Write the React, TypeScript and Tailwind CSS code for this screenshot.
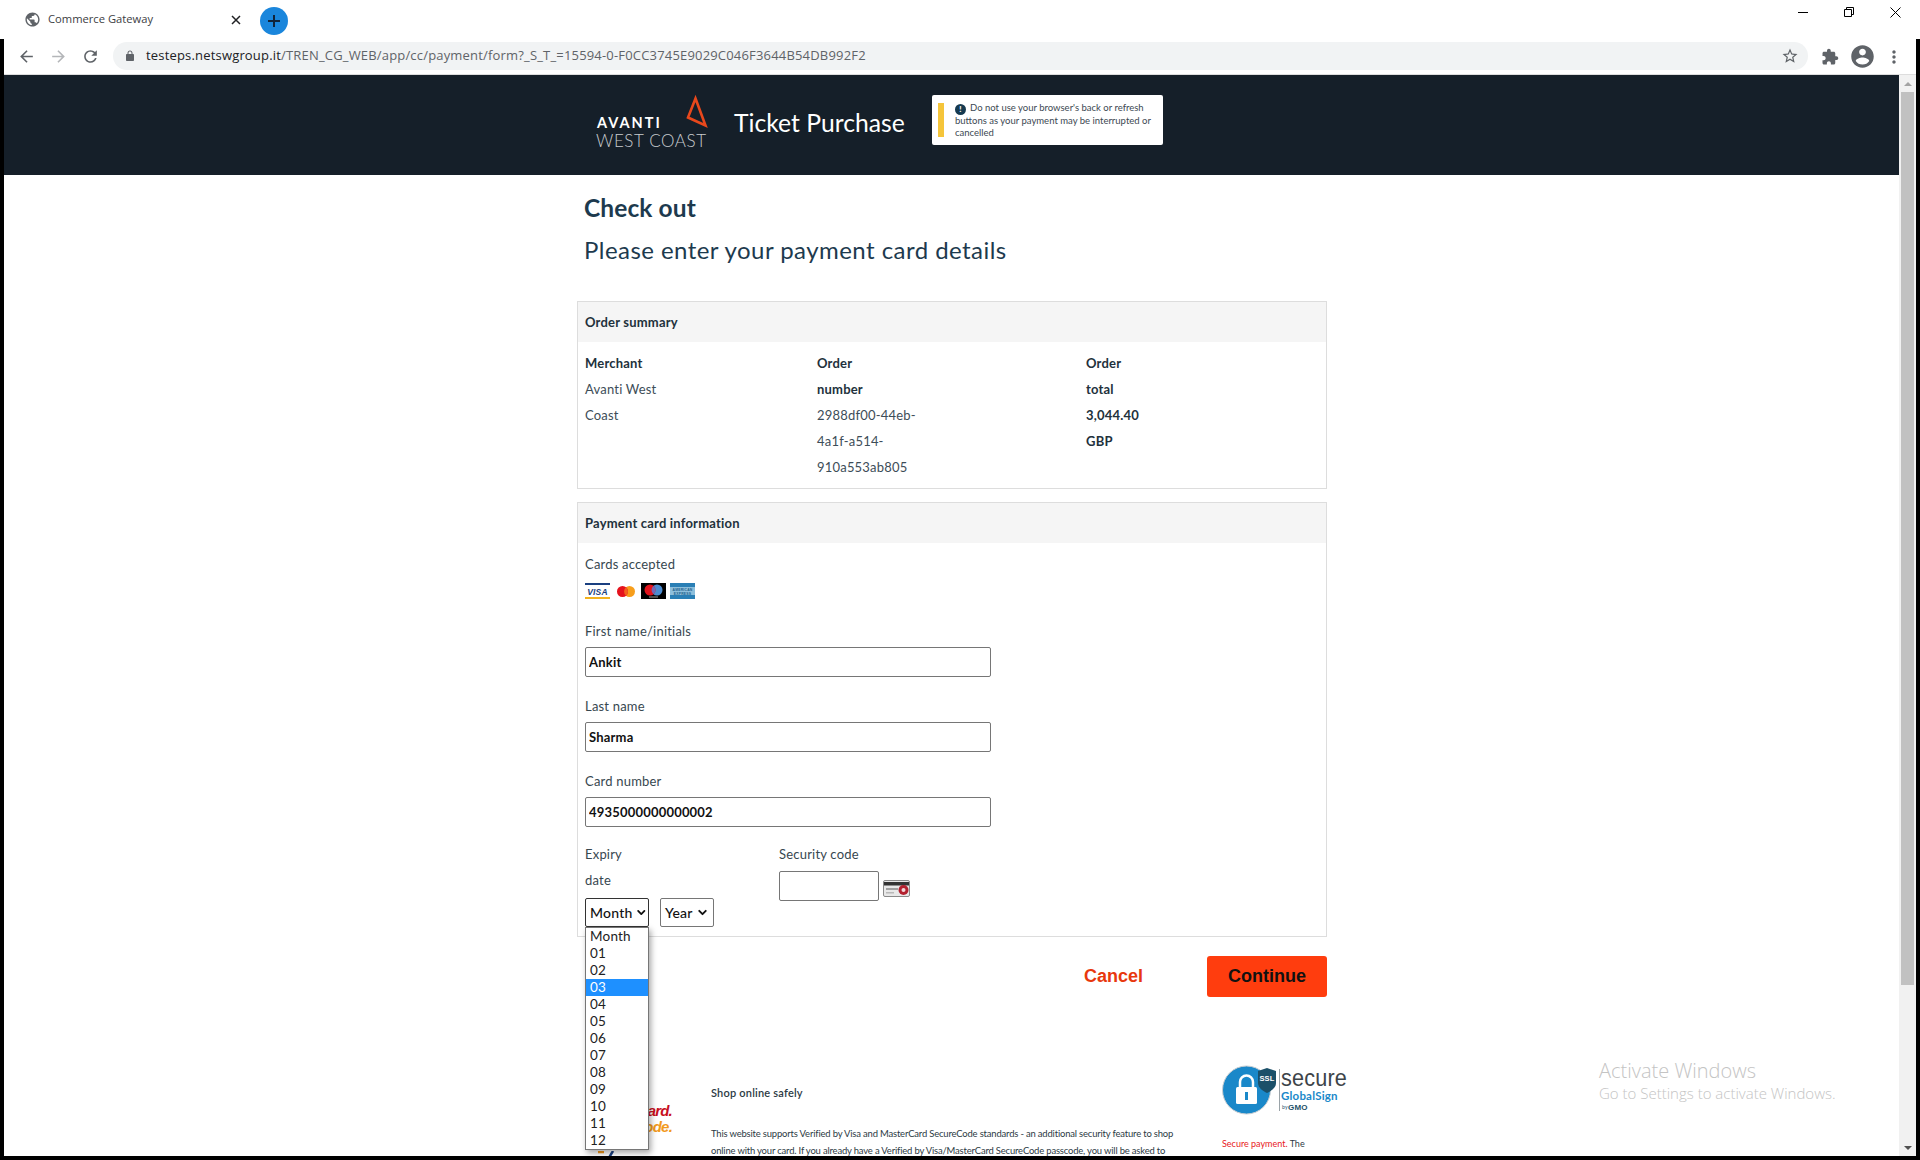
import { ChevronDown } from "lucide-react";

const months = ["Month", "01", "02", "03", "04", "05", "06", "07", "08", "09", "10", "11", "12"];

function MaterialIcon({ d, size = 24, className = "" }: { d: string; size?: number; className?: string }) {
  return (
    <svg width={size} height={size} viewBox="0 0 24 24" className={className} fill="currentColor">
      <path d={d} />
    </svg>
  );
}

const icons = {
  globe:
    "M12 2C6.48 2 2 6.48 2 12s4.48 10 10 10 10-4.48 10-10S17.52 2 12 2zm-1 17.93c-3.95-.49-7-3.85-7-7.93 0-.62.08-1.21.21-1.79L9 15v1c0 1.1.9 2 2 2v1.93zm6.9-2.54c-.26-.81-1-1.39-1.9-1.39h-1v-3c0-.55-.45-1-1-1H8v-2h2c.55 0 1-.45 1-1V7h2c1.1 0 2-.9 2-2v-.41c2.93 1.19 5 4.06 5 7.41 0 2.08-.8 3.97-2.1 5.39z",
  back: "M20 11H7.83l5.59-5.59L12 4l-8 8 8 8 1.41-1.41L7.83 13H20v-2z",
  forward: "M12 4l-1.41 1.41L16.17 11H4v2h12.17l-5.58 5.59L12 20l8-8z",
  refresh:
    "M17.65 6.35C16.2 4.9 14.21 4 12 4c-4.42 0-7.99 3.58-7.99 8s3.57 8 7.99 8c3.73 0 6.84-2.55 7.73-6h-2.08c-.82 2.33-3.04 4-5.65 4-3.31 0-6-2.69-6-6s2.69-6 6-6c1.66 0 3.14.69 4.22 1.78L13 11h7V4l-2.35 2.35z",
  lock: "M18 8h-1V6c0-2.76-2.24-5-5-5S7 3.24 7 6v2H6c-1.1 0-2 .9-2 2v10c0 1.1.9 2 2 2h12c1.1 0 2-.9 2-2V10c0-1.1-.9-2-2-2zM9 6c0-1.66 1.34-3 3-3s3 1.34 3 3v2H9V6z",
  star: "M22 9.24l-7.19-.62L12 2 9.19 8.63 2 9.24l5.46 4.73L5.82 21 12 17.27 18.18 21l-1.63-7.03L22 9.24zM12 15.4l-3.76 2.27 1-4.28-3.32-2.88 4.38-.38L12 6.1l1.71 4.04 4.38.38-3.32 2.88 1 4.28L12 15.4z",
  extension:
    "M20.5 11H19V7c0-1.1-.9-2-2-2h-4V3.5C13 2.12 11.88 1 10.5 1S8 2.12 8 3.5V5H4c-1.1 0-1.99.9-1.99 2v3.8H3.5c1.49 0 2.7 1.21 2.7 2.7s-1.21 2.7-2.7 2.7H2V20c0 1.1.9 2 2 2h3.8v-1.5c0-1.49 1.21-2.7 2.7-2.7 1.49 0 2.7 1.21 2.7 2.7V22H17c1.1 0 2-.9 2-2v-4h1.5c1.38 0 2.5-1.12 2.5-2.5S21.88 11 20.5 11z",
  account:
    "M12 2C6.48 2 2 6.48 2 12s4.48 10 10 10 10-4.48 10-10S17.52 2 12 2zm0 3c1.66 0 3 1.34 3 3s-1.34 3-3 3-3-1.34-3-3 1.34-3 3-3zm0 14.2c-2.5 0-4.71-1.28-6-3.22.03-1.99 4-3.08 6-3.08 1.99 0 5.97 1.09 6 3.08-1.29 1.94-3.5 3.22-6 3.22z",
  more: "M12 8c1.1 0 2-.9 2-2s-.9-2-2-2-2 .9-2 2 .9 2 2 2zm0 2c-1.1 0-2 .9-2 2s.9 2 2 2 2-.9 2-2-.9-2-2-2zm0 6c-1.1 0-2 .9-2 2s.9 2 2 2 2-.9 2-2-.9-2-2-2z",
};

function TabStrip() {
  return (
    <div className="flex h-[39px] items-start bg-white font-['Open_Sans',sans-serif]">
      <div className="flex h-[39px] w-[250px] items-center pl-[24px]">
        <MaterialIcon d={icons.globe} size={17} className="text-[#5f6368]" />
        <span className="ml-[7px] text-[11.2px] text-[#3c4043]">Commerce Gateway</span>
        <svg width="10" height="10" viewBox="0 0 10 10" className="ml-auto mr-[9px] text-[#202124]" stroke="currentColor" strokeWidth="1.5">
          <path d="M1 1l8 8M9 1l-8 8" />
        </svg>
      </div>
      <div className="ml-[10px] mt-[7px] flex h-[28px] w-[28px] items-center justify-center rounded-full bg-[#1a86dc]">
        <svg width="12" height="12" viewBox="0 0 12 12" stroke="#10243a" strokeWidth="2">
          <path d="M6 0v12M0 6h12" />
        </svg>
      </div>
      <div className="ml-auto flex items-center pr-[2px] pt-[3px]">
        <div className="flex h-[18px] w-[46px] items-center justify-center">
          <div className="h-px w-[10px] bg-black" />
        </div>
        <div className="flex h-[18px] w-[46px] items-center justify-center">
          <svg width="10" height="10" viewBox="0 0 10 10" fill="none" stroke="black">
            <path d="M2.5 2.5V.5h7v7h-2M.5 2.5h7v7h-7z" />
          </svg>
        </div>
        <div className="flex h-[18px] w-[46px] items-center justify-center">
          <svg width="11" height="11" viewBox="0 0 11 11" fill="none" stroke="black">
            <path d="M.5.5l10 10M10.5.5l-10 10" />
          </svg>
        </div>
      </div>
    </div>
  );
}

function Toolbar() {
  return (
    <div className="flex h-[36px] shrink-0 items-start border-b border-[#dddddd] bg-white pl-[6px] font-['Open_Sans',sans-serif]">
      <div className="flex h-[35px] w-[32px] items-center justify-center">
        <MaterialIcon d={icons.back} size={19} className="text-[#5f6368]" />
      </div>
      <div className="flex h-[35px] w-[32px] items-center justify-center">
        <MaterialIcon d={icons.forward} size={19} className="text-[#b4b6b9]" />
      </div>
      <div className="flex h-[35px] w-[32px] items-center justify-center">
        <MaterialIcon d={icons.refresh} size={19} className="text-[#5f6368]" />
      </div>
      <div className="ml-[7px] mt-[3px] flex h-[28px] flex-1 items-center rounded-full bg-[#f1f3f4] pl-[11px] pr-[9px]">
        <MaterialIcon d={icons.lock} size={12} className="text-[#5f6368]" />
        <span className="ml-[10px] text-[13px] tracking-[0.18px] text-[#5f6368]">
          <span className="text-[#202124]">testeps.netswgroup.it</span>
          /TREN_CG_WEB/app/cc/payment/form?_S_T_=15594-0-F0CC3745E9029C046F3644B54DB992F2
        </span>
        <MaterialIcon d={icons.star} size={18} className="ml-auto text-[#5f6368]" />
      </div>
      <div className="flex h-[35px] pl-[6px] pr-[6px]">
        <div className="flex w-[32px] items-center justify-center">
          <MaterialIcon d={icons.extension} size={18} className="text-[#5f6368]" />
        </div>
        <div className="flex w-[32px] items-center justify-center">
          <MaterialIcon d={icons.account} size={27} className="text-[#5f6368]" />
        </div>
        <div className="flex w-[32px] items-center justify-center">
          <MaterialIcon d={icons.more} size={20} className="text-[#5f6368]" />
        </div>
      </div>
    </div>
  );
}

function AvantiLogo() {
  return (
    <div className="relative h-[50px] w-[112px] text-white">
      <svg width="24" height="36" viewBox="0 0 24 36" className="absolute right-0 top-[-6px]" fill="none" stroke="#e8481c" strokeWidth="2.6">
        <path d="M11.5 4.5L4 23.5L21.5 31.5Z" />
      </svg>
      <div className="absolute left-[1px] top-[14px] text-[14.5px] font-bold leading-[18px] tracking-[2px]">AVANTI</div>
      <div className="absolute left-0 top-[31px] whitespace-nowrap text-[17px] font-light leading-[20px] tracking-[0.6px] text-[#c8cbce]">
        WEST COAST
      </div>
    </div>
  );
}

function Header() {
  return (
    <div className="h-[100px] shrink-0 bg-[#151f29]">
      <div className="ml-[573px] flex w-[750px] items-start pl-[19px]">
        <div className="mt-[25px]">
          <AvantiLogo />
        </div>
        <div className="ml-[26px] w-[178px] whitespace-nowrap pt-[30px] text-[24.7px] leading-[36px] text-white">Ticket Purchase</div>
        <div className="ml-[20px] mt-[20px] flex h-[50px] w-[231px] shrink-0 items-center rounded-[2px] bg-white pl-[6px]">
          <div className="h-[34px] w-[6px] bg-[#f5c53a]" />
          <div className="ml-[11px] w-[205px] text-[9.5px] leading-[11.5px] text-[#3c4852]">
            <span className="mr-[4px] inline-block h-[11px] w-[11px] rounded-full bg-[#163a50] text-center align-[-1px] text-[8px] font-black leading-[11px] text-white">
              !
            </span>
            Do not use your browser's back or refresh buttons as your payment may be interrupted or cancelled
          </div>
        </div>
      </div>
    </div>
  );
}

function CardLogos() {
  return (
    <div className="mt-[6px] flex h-[16px] items-center">
      <svg width="25" height="16" viewBox="0 0 25 16">
        <rect width="25" height="16" fill="#ffffff" />
        <rect width="25" height="2" fill="#1a3f80" />
        <rect y="14" width="25" height="2" fill="#f3b21c" />
        <text x="12.5" y="11.5" textAnchor="middle" fontSize="8.5" fontWeight="700" fontStyle="italic" fontFamily="Liberation Sans, sans-serif" fill="#1a3f80">
          VISA
        </text>
      </svg>
      <svg width="18" height="11" viewBox="0 0 18 11" className="ml-[7px]">
        <circle cx="12.5" cy="5.5" r="5.5" fill="#f79e1b" />
        <circle cx="5.5" cy="5.5" r="5.5" fill="#e5121d" />
        <path d="M9 1.3a5.5 5.5 0 0 1 0 8.4a5.5 5.5 0 0 1 0-8.4z" fill="#f4601d" />
      </svg>
      <svg width="25" height="16" viewBox="0 0 25 16" className="ml-[6px]">
        <rect width="25" height="16" fill="#000000" />
        <circle cx="16" cy="7" r="5.5" fill="#4a8bd0" />
        <circle cx="9" cy="7" r="5.5" fill="#e3131c" />
        <path d="M12.5 2.8a5.5 5.5 0 0 1 0 8.4a5.5 5.5 0 0 1 0-8.4z" fill="#7466b5" />
        <rect x="8" y="13.5" width="9" height="1" fill="#9a9a9a" />
      </svg>
      <svg width="25" height="16" viewBox="0 0 25 16" className="ml-[4px]">
        <rect width="25" height="16" fill="#2a7fb5" />
        <rect y="4" width="25" height="8" fill="#8dbfdc" />
        <text x="12.5" y="7.5" textAnchor="middle" fontSize="3.4" fontWeight="700" fontFamily="Liberation Sans, sans-serif" fill="#1d5f8c">
          AMERICAN
        </text>
        <text x="12.5" y="11.5" textAnchor="middle" fontSize="3.4" fontWeight="700" fontFamily="Liberation Sans, sans-serif" fill="#1d5f8c">
          EXPRESS
        </text>
      </svg>
    </div>
  );
}

function TextField({ value, label, top }: { value: string; label: string; top: string }) {
  return (
    <div className={top}>
      <label className="block text-[13px] leading-[26px] text-[#37474f]">{label}</label>
      <input
        className="mt-[3px] block h-[30px] w-[406px] rounded-[2px] border border-[#767676] px-[3px] text-[13px] font-bold text-[#111111] outline-none"
        defaultValue={value}
        readOnly
      />
    </div>
  );
}

function MonthSelect() {
  return (
    <div className="relative">
      <div className="flex h-[29px] w-[64px] items-center rounded-[2px] border border-[#333333] pl-[4px] text-[14px] font-medium text-[#111111]">
        Month
        <ChevronDown size={13} strokeWidth={3.5} className="ml-[3px]" />
      </div>
      <ul className="absolute left-0 top-full z-10 w-[64px] border border-[#767676] bg-white text-[13.5px] leading-[17px] text-[#222222] shadow-[2px_3px_6px_rgba(0,0,0,0.35)]">
        {months.map((month) => (
          <li key={month} className={month === "03" ? "bg-[#1e90ff] pl-[4px] text-white" : "pl-[4px]"}>
            {month}
          </li>
        ))}
      </ul>
    </div>
  );
}

function SslBadge() {
  return (
    <svg width="126" height="50" viewBox="0 0 126 50">
      <circle cx="24.5" cy="25" r="24" fill="#1a88c9" stroke="#c9ced2" strokeWidth="1" />
      <path d="M18 22v-5a6.5 6.5 0 0 1 13 0v5" fill="none" stroke="#ffffff" strokeWidth="2.5" />
      <rect x="14" y="22" width="21" height="17" rx="1.5" fill="#ffffff" />
      <rect x="23" y="27" width="3" height="8" fill="#1a88c9" />
      <path d="M36 6l9-3l9 3v12c0 5-5 8-9 10c-4-2-9-5-9-10z" fill="#1b5069" />
      <text x="45" y="16" textAnchor="middle" fontSize="7.5" fontWeight="700" fontFamily="Liberation Sans, sans-serif" fill="#ffffff">
        SSL
      </text>
      <rect x="57" y="4" width="1" height="42" fill="#9aa3a8" />
      <text x="59" y="21" fontSize="24" fontFamily="Liberation Sans, sans-serif" fill="#3d4449" textLength="66" lengthAdjust="spacingAndGlyphs">
        secure
      </text>
      <text x="59" y="35" fontSize="11.5" fontWeight="700" fontFamily="Lato, sans-serif" fill="#1a88c9">
        GlobalSign
      </text>
      <text x="60" y="44" fontSize="5" fontFamily="Lato, sans-serif" fill="#1b5069">
        by
      </text>
      <text x="66" y="44.5" fontSize="8" fontWeight="900" fontFamily="Liberation Sans, sans-serif" fill="#1b5069">
        GMO
      </text>
    </svg>
  );
}

function Page() {
  return (
    <div className="ml-[573px] w-[750px] font-[Lato,sans-serif] tracking-[0.2px]">
      <h1 className="mt-[17px] pl-[7px] text-[24.5px] font-bold leading-[32px] tracking-[0.1px] text-[#1d3a4e]">Check out</h1>
      <h2 className="mt-[10px] pl-[7px] text-[24px] leading-[32px] tracking-[0.45px] text-[#1d3a4e]">Please enter your payment card details</h2>

      <section className="mt-[35px] border border-[#dddddd]">
        <div className="flex h-[40px] items-center bg-[#f5f5f5] px-[7px] pt-[2px] text-[13px] font-bold text-[#22313c]">Order summary</div>
        <div className="flex px-[7px] pb-[8px] pt-[8px] text-[13px] leading-[26px] text-[#3d4d58]">
          <div className="w-[232px]">
            <div className="font-bold text-[#22313c]">Merchant</div>
            <div>Avanti West</div>
            <div>Coast</div>
          </div>
          <div className="w-[269px]">
            <div className="font-bold text-[#22313c]">Order</div>
            <div className="font-bold text-[#22313c]">number</div>
            <div>2988df00-44eb-</div>
            <div>4a1f-a514-</div>
            <div>910a553ab805</div>
          </div>
          <div className="font-bold text-[#22313c]">
            <div>Order</div>
            <div>total</div>
            <div>3,044.40</div>
            <div>GBP</div>
          </div>
        </div>
      </section>

      <section className="mt-[13px] border border-[#dddddd]">
        <div className="flex h-[40px] items-center bg-[#f5f5f5] px-[7px] pt-[2px] text-[13px] font-bold text-[#22313c]">Payment card information</div>
        <div className="px-[7px] pb-[9px] pt-[8px]">
          <div className="text-[13px] leading-[26px] text-[#37474f]">Cards accepted</div>
          <CardLogos />
          <TextField label="First name/initials" value="Ankit" top="mt-[19px]" />
          <TextField label="Last name" value="Sharma" top="mt-[16px]" />
          <TextField label="Card number" value="4935000000000002" top="mt-[16px]" />
          <div className="mt-[14px] flex items-start">
            <div className="w-[194px]">
              <div className="text-[13px] leading-[26px] text-[#37474f]">Expiry</div>
              <div className="text-[13px] leading-[26px] text-[#37474f]">date</div>
              <div className="mt-[5px] flex items-start">
                <MonthSelect />
                <div className="ml-[11px] flex h-[29px] w-[54px] items-center rounded-[2px] border border-[#767676] pl-[4px] text-[14px] font-medium text-[#111111]">
                  Year
                  <ChevronDown size={13} strokeWidth={3.5} className="ml-auto mr-[4px]" />
                </div>
              </div>
            </div>
            <div>
              <div className="text-[13px] leading-[26px] text-[#37474f]">Security code</div>
              <div className="mt-[4px] flex items-start">
                <input className="block h-[30px] w-[100px] rounded-[2px] border border-[#767676] outline-none" readOnly />
                <svg width="27" height="17" viewBox="0 0 27 17" className="ml-[4px] mt-[9px]">
                  <rect x="0.5" y="0.5" width="26" height="16" rx="1.5" fill="#e8e8e8" stroke="#8a8a8a" />
                  <rect x="1" y="2" width="25" height="3.5" fill="#333333" />
                  <rect x="3" y="8" width="12" height="2" fill="#a0a0a0" />
                  <rect x="3" y="12" width="8" height="1.5" fill="#b8b8b8" />
                  <circle cx="20.5" cy="10" r="5" fill="#b3212f" />
                  <circle cx="20.5" cy="10" r="2" fill="#f1d7da" />
                </svg>
              </div>
            </div>
          </div>
        </div>
      </section>

      <div className="mt-[19px] flex h-[41px] items-center justify-end font-['Liberation_Sans',sans-serif] text-[18px] font-bold tracking-normal">
        <button className="text-[#e8380d]">Cancel</button>
        <button className="ml-[64px] h-[41px] w-[120px] rounded-[3px] bg-[#ff3d0e] text-[#111111]">Continue</button>
      </div>

      <div className="mt-[68px] flex items-start">
        <div className="relative h-[90px] w-[134px] shrink-0">
          <div className="absolute right-[39px] top-[38px] whitespace-nowrap text-right font-['Liberation_Sans',sans-serif] text-[15px] font-bold italic leading-[16px] tracking-[-0.8px]">
            <div className="text-[#c8101e]">MasterCard.</div>
            <div className="text-[#f29a1d]">SecureCode.</div>
          </div>
          <svg width="16" height="10" viewBox="0 0 16 10" className="absolute left-[21px] top-[86px]" fill="none" strokeWidth="2.5">
            <path d="M0 1h6" stroke="#f29a1d" />
            <path d="M15 0L9 10" stroke="#1a3f80" />
          </svg>
        </div>
        <div className="w-[464px] shrink-0 pt-[19px] text-[#2c3a44]">
          <div className="text-[11px] font-semibold leading-[17px]">Shop online safely</div>
          <p className="mt-[24px] whitespace-nowrap text-[9.45px] leading-[17px] tracking-[-0.17px]">
            <span className="block">This website supports Verified by Visa and MasterCard SecureCode standards - an additional security feature to shop</span>
            <span className="block">online with your card. If you already have a Verified by Visa/MasterCard SecureCode passcode, you will be asked to</span>
            <span className="block">enter it before your order is complete.</span>
          </p>
        </div>
        <div className="ml-[47px] w-[126px] shrink-0">
          <SslBadge />
          <p className="mt-[20px] whitespace-nowrap text-[9px] leading-[17px] tracking-normal text-[#2c3a44]">
            <span className="text-[#e8191c]">Secure payment.</span> The
          </p>
        </div>
      </div>
    </div>
  );
}

function Scrollbar() {
  return (
    <div className="flex w-[17px] shrink-0 flex-col items-center bg-[#f1f1f1]">
      <div className="flex h-[17px] items-center justify-center">
        <div className="h-0 w-0 border-x-[4px] border-b-[4px] border-x-transparent border-b-[#a3a3a3]" />
      </div>
      <div className="h-[893px] w-[13px] bg-[#c1c1c1]" />
      <div className="mt-auto flex h-[17px] items-center justify-center">
        <div className="h-0 w-0 border-x-[4px] border-t-[4px] border-x-transparent border-t-[#505050]" />
      </div>
    </div>
  );
}

export default function App() {
  return (
    <div className="flex h-[1160px] w-[1920px] flex-col overflow-hidden bg-black">
      <TabStrip />
      <div className="flex min-h-0 flex-1 pl-[4px] pr-[4px]">
        <div className="flex min-w-0 flex-1 flex-col">
          <Toolbar />
          <div className="flex min-h-0 flex-1">
            <main className="relative min-w-0 flex-1 overflow-hidden bg-white font-[Lato,sans-serif]">
              <Header />
              <Page />
              <div className="absolute left-[1595px] top-[983px] whitespace-nowrap font-['Open_Sans',sans-serif] text-[#c4c4c4]">
                <div className="text-[20px] font-light leading-[26px]">Activate Windows</div>
                <div className="text-[15px] font-light leading-[19px]">Go to Settings to activate Windows.</div>
              </div>
            </main>
            <Scrollbar />
          </div>
        </div>
      </div>
      <div className="h-[4px] shrink-0 bg-black" />
    </div>
  );
}
